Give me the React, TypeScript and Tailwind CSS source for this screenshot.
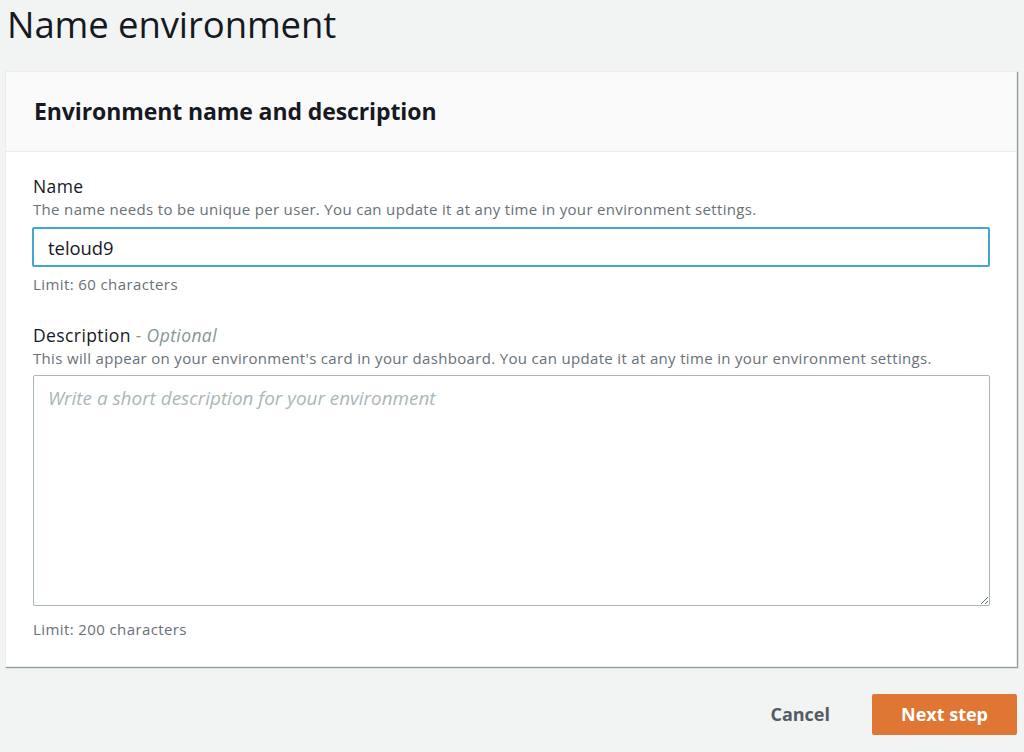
import { useState } from "react";

const font = { fontFamily: '"Open Sans", "Noto Sans", Arial, sans-serif' };

export default function App() {
  const [name, setName] = useState("teloud9");
  const [desc, setDesc] = useState("");

  return (
    <div className="min-h-[752px] w-[1024px] bg-[#f2f3f3] text-[#16191f]" style={font}>
      <h1 className="pl-[7px] pt-[1px] text-[36.5px] font-normal leading-[46px] tracking-[-0.1px] text-[#16191f]">
        Name environment
      </h1>

      <section className="ml-[5px] mr-[7px] mt-[24px] border border-[#eaeded] bg-white shadow-[1px_1px_1px_0_rgba(0,28,36,0.3),1px_1px_1px_0_rgba(0,28,36,0.15)]">
        <header className="flex h-[80px] items-center border-b border-[#eaeded] bg-[#fafafa] px-[28px]">
          <h2 className="text-[23px] font-bold tracking-[-0.1px] text-[#16191f]">Environment name and description</h2>
        </header>

        <div className="px-[26px] pb-[26px] pt-[22px]">
          <label className="block pl-[1px] text-[17.5px] leading-[24px] tracking-[0.4px] text-[#16191f]">Name</label>
          <p className="mt-[1px] pl-[1px] text-[15px] leading-[20px] tracking-[0.33px] text-[#687078]">
            The name needs to be unique per user. You can update it at any time in your environment settings.
          </p>
          <input
            value={name}
            onChange={(e) => setName(e.target.value)}
            className="mt-[8px] block h-[40px] w-full rounded-[2px] border-2 border-[#44a6cf] bg-white px-[14px] text-[18.4px] text-[#16191f] outline-none"
            style={font}
          />
          <p className="mt-[6px] pl-[1px] text-[15px] leading-[22px] tracking-[0.4px] text-[#687078]">Limit: 60 characters</p>

          <label className="mt-[28px] block pl-[1px] text-[17.5px] leading-[24px] tracking-[0.4px] text-[#16191f]">
            Description <span className="italic text-[#879596]">- Optional</span>
          </label>
          <p className="mt-[1px] pl-[1px] text-[15px] leading-[20px] tracking-[0.33px] text-[#687078]">
            This will appear on your environment's card in your dashboard. You can update it at any time in your environment settings.
          </p>
          <textarea
            value={desc}
            onChange={(e) => setDesc(e.target.value)}
            placeholder="Write a short description for your environment"
            className="mt-[7px] ml-[1px] block h-[231px] w-[calc(100%-1px)] resize-y rounded-[2px] border border-[#aab7b8] bg-white px-[14px] py-[8px] text-[18.9px] italic text-[#16191f] outline-none placeholder:text-[#aab7b8]"
            style={font}
          />
          <p className="mt-[12px] pl-[1px] text-[15px] leading-[22px] tracking-[0.4px] text-[#687078]">Limit: 200 characters</p>
        </div>
      </section>

      <div className="mr-[7px] mt-[27px] flex items-center justify-end gap-[42px]">
        <button className="text-[18px] font-bold text-[#545b64]">Cancel</button>
        <button className="h-[41px] w-[145px] rounded-[2px] bg-[#df7633] text-[18px] font-bold text-white">
          Next step
        </button>
      </div>
    </div>
  );
}
